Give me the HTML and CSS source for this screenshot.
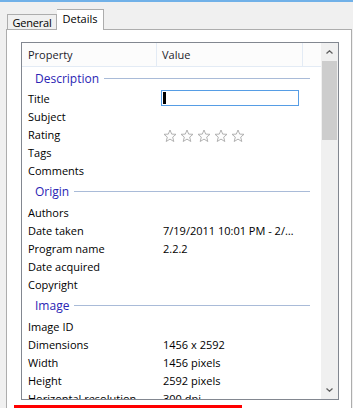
FILE: index.html
```html
<!DOCTYPE html>
<html lang="en">
<head>
    <meta charset="UTF-8">
    <title>Details</title>
    <link rel="stylesheet" href="styles.css">
</head>
<body>
    <div class="tabs">
        <div class="tab">General</div>
        <div class="tab active">Details</div>
    </div>
    <div class="panel">
        <div class="listbox">
            <div class="list">
                <div class="header">
                    <div class="col prop">Property</div>
                    <div class="col val">Value</div>
                    <div class="col rest"></div>
                </div>

                <div class="group first"><span>Description</span><i></i></div>
                <div class="row"><div class="prop">Title</div><div class="val"><div class="edit"><b></b></div></div></div>
                <div class="row"><div class="prop">Subject</div><div class="val"></div></div>
                <div class="row"><div class="prop">Rating</div><div class="val stars">
                    <svg viewBox="0 0 14 14"><path d="M7 1 L8.7 5.1 L13 5.3 L9.7 8.1 L10.8 12.5 L7 10.1 L3.2 12.5 L4.3 8.1 L1 5.3 L5.3 5.1 Z"/></svg>
                    <svg viewBox="0 0 14 14"><path d="M7 1 L8.7 5.1 L13 5.3 L9.7 8.1 L10.8 12.5 L7 10.1 L3.2 12.5 L4.3 8.1 L1 5.3 L5.3 5.1 Z"/></svg>
                    <svg viewBox="0 0 14 14"><path d="M7 1 L8.7 5.1 L13 5.3 L9.7 8.1 L10.8 12.5 L7 10.1 L3.2 12.5 L4.3 8.1 L1 5.3 L5.3 5.1 Z"/></svg>
                    <svg viewBox="0 0 14 14"><path d="M7 1 L8.7 5.1 L13 5.3 L9.7 8.1 L10.8 12.5 L7 10.1 L3.2 12.5 L4.3 8.1 L1 5.3 L5.3 5.1 Z"/></svg>
                    <svg viewBox="0 0 14 14"><path d="M7 1 L8.7 5.1 L13 5.3 L9.7 8.1 L10.8 12.5 L7 10.1 L3.2 12.5 L4.3 8.1 L1 5.3 L5.3 5.1 Z"/></svg>
                </div></div>
                <div class="row"><div class="prop">Tags</div><div class="val"></div></div>
                <div class="row"><div class="prop">Comments</div><div class="val"></div></div>

                <div class="group"><span>Origin</span><i></i></div>
                <div class="row"><div class="prop">Authors</div><div class="val"></div></div>
                <div class="row"><div class="prop">Date taken</div><div class="val">7/19/2011 10:01 PM - 2/…</div></div>
                <div class="row"><div class="prop">Program name</div><div class="val">2.2.2</div></div>
                <div class="row"><div class="prop">Date acquired</div><div class="val"></div></div>
                <div class="row"><div class="prop">Copyright</div><div class="val"></div></div>

                <div class="group"><span>Image</span><i></i></div>
                <div class="row"><div class="prop">Image ID</div><div class="val"></div></div>
                <div class="row"><div class="prop">Dimensions</div><div class="val">1456 x 2592</div></div>
                <div class="row"><div class="prop">Width</div><div class="val">1456 pixels</div></div>
                <div class="row"><div class="prop">Height</div><div class="val">2592 pixels</div></div>
                <div class="row"><div class="prop">Horizontal resolution</div><div class="val">300 dpi</div></div>
            </div>
            <div class="scrollbar">
                <div class="arrow">
                    <svg viewBox="0 0 7 4"><polyline points="0.5,3.5 3.5,0.8 6.5,3.5"/></svg>
                </div>
                <div class="track"><div class="thumb"></div></div>
                <div class="arrow">
                    <svg viewBox="0 0 7 4"><polyline points="0.5,0.5 3.5,3.2 6.5,0.5"/></svg>
                </div>
            </div>
        </div>
    </div>
    <div class="mark"></div>
</body>
</html>
```

FILE: styles.css
```css
body {
    margin: 0;
    height: 408px;
    overflow: hidden;
    background-color: #f0f0f0;
    border-top: 2px solid #71b1e8;
    box-sizing: border-box;
    font-family: 'Open Sans', sans-serif;
    font-size: 11px;
    color: #000;
    position: relative;
}
.tabs {
    display: flex;
    align-items: flex-end;
    padding-left: 7px;
    height: 27px;
}
.tab {
    height: 14px;
    width: 48px;
    border: 1px solid #adadad;
    border-bottom: none;
    background-color: #f0f0f0;
    display: flex;
    align-items: center;
    justify-content: center;
    line-height: 1;
    letter-spacing: -0.2px;
    white-space: nowrap;
}
.tab.active {
    height: 21px;
    width: 47px;
    border-left: none;
    background-color: #fff;
    margin-bottom: -1px;
    position: relative;
    z-index: 1;
    padding-bottom: 3px;
    box-sizing: border-box;
    letter-spacing: 0;
}
.panel {
    margin-left: 6px;
    width: 346px;
    height: 400px;
    box-sizing: border-box;
    border: 1px solid #adadad;
    background-color: #fff;
    padding: 12px 0 0 14px;
}
.listbox {
    width: 318px;
    height: 358px;
    box-sizing: border-box;
    border: 1px solid #828790;
    display: flex;
    overflow: hidden;
}
.list {
    width: 299px;
    overflow: hidden;
}
.header {
    display: flex;
    height: 24px;
    box-sizing: border-box;
    border-bottom: 1px solid #e3ebf5;
    background-color: #fcfcfc;
    color: #1c1c2c;
}
.header .col {
    display: flex;
    align-items: center;
    border-right: 1px solid #e3ebf5;
}
.header .prop {
    width: 135px;
    padding-left: 6px;
    box-sizing: border-box;
}
.header .val {
    width: 146px;
    padding-left: 5px;
    box-sizing: border-box;
}
.header .rest {
    flex: 1;
    border-right: none;
}
.group {
    height: 24px;
    display: flex;
    align-items: center;
    padding-left: 13px;
    width: 288px;
    box-sizing: border-box;
    color: #2a24b4;
    font-size: 12px;
}
.group.first {
    height: 22px;
}
.group i {
    flex: 1;
    height: 1px;
    background-color: #a9bbd8;
    margin-left: 5px;
}
.row {
    display: flex;
    height: 18px;
    align-items: center;
}
.row .prop {
    width: 135px;
    padding-left: 6px;
    box-sizing: border-box;
    white-space: nowrap;
}
.row .val {
    padding-left: 6px;
    white-space: nowrap;
}
.edit {
    width: 138px;
    height: 16px;
    margin-left: -2px;
    box-sizing: border-box;
    border: 1px solid #569de5;
    padding: 1px;
}
.edit b {
    display: block;
    width: 3px;
    height: 12px;
    background-color: #000;
}
.stars {
    display: flex;
    gap: 3px;
    padding-top: 3px;
}
.stars svg {
    width: 14px;
    height: 14px;
    fill: #fdfdfd;
    stroke: #a9a9a9;
    stroke-width: 0.9;
    stroke-linejoin: round;
}
.scrollbar {
    width: 17px;
    background-color: #f0f0f0;
    display: flex;
    flex-direction: column;
}
.arrow {
    height: 18px;
    display: flex;
    align-items: center;
    justify-content: center;
}
.arrow svg {
    width: 7px;
    height: 4px;
    fill: none;
    stroke: #606060;
    stroke-width: 1.3;
}
.track {
    flex: 1;
}
.thumb {
    height: 79px;
    margin: 0 1px;
    background-color: #cdcdcd;
}
.mark {
    position: absolute;
    left: 14px;
    top: 403px;
    width: 228px;
    height: 4px;
    background-color: #f00;
}
```
